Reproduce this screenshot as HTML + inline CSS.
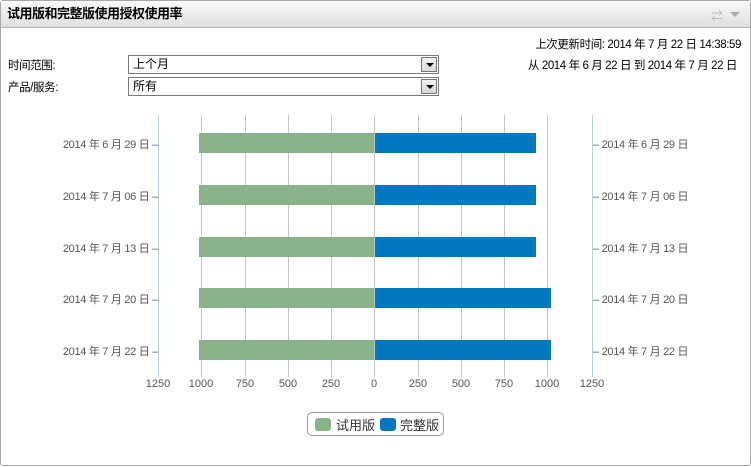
<!DOCTYPE html>
<html><head><meta charset="utf-8"><style>
*{margin:0;padding:0;box-sizing:border-box}
body{width:751px;height:467px;background:#fff;font-family:"Liberation Sans","Noto Sans CJK SC",sans-serif;font-size:12px;color:#000;position:relative;overflow:hidden}
.a{position:absolute}
.frame{left:0;top:0;width:751px;height:466px;border:1px solid #a8a8a8;border-radius:3px}
.title{left:1px;top:1px;width:749px;height:27px;background:linear-gradient(#fafafa,#e0e0e0);border-bottom:1px solid #b5b5b5;font-weight:bold;font-size:13px;line-height:26px;padding-left:6px;letter-spacing:-0.5px}
.sel{height:19px;width:311px;border:1px solid #7a7a7a;background:#fff;padding-left:4px;line-height:17px}
.btn{right:1px;top:1px;width:16px;height:15px;border:1px solid #777;background:linear-gradient(#f4f4f4,#d8d8d8)}
.btn:after{content:"";position:absolute;left:4px;top:5px;border-left:4px solid transparent;border-right:4px solid transparent;border-top:4px solid #000}
.g{width:1px;top:115px;height:255px;background:#c4c4c4}
.ax{width:1px;top:115px;height:255px;background:#b9cde4}
.tk{width:1px;top:370px;height:7px;background:#c4c4c4}
.lab{color:#555;font-size:11px;top:378px;width:40px;text-align:center}
.gr{background:#88b388;height:20px}
.bl{background:#0078c0;height:20px}
.yl{color:#555;width:150px;text-align:right;left:8px;font-size:11px;letter-spacing:-0.3px}
.yr{color:#555;left:593px;font-size:11px;letter-spacing:-0.3px}
.sm{font-size:11.5px;letter-spacing:-0.4px}
</style></head><body>
<div class="a frame"></div>
<div class="a title">试用版和完整版使用授权使用率</div>
<div class="a" style="left:711px;top:7px;color:#b5b5b5;font-size:12px">⇄</div>
<div class="a" style="left:730px;top:12px;border-left:5px solid transparent;border-right:5px solid transparent;border-top:5px solid #aaa"></div>
<div class="a sm" style="right:10px;top:36px">上次更新时间: 2014 年 7 月 22 日 14:38:59</div>
<div class="a sm" style="right:14px;top:57px">从 2014 年 6 月 22 日 到 2014 年 7 月 22 日</div>
<div class="a sm" style="left:8px;top:57px">时间范围:</div>
<div class="a sm" style="left:8px;top:79px">产品/服务:</div>
<div class="a sel" style="left:128px;top:55px">上个月<div class="a btn"></div></div>
<div class="a sel" style="left:128px;top:77px">所有<div class="a btn"></div></div>

<div class="a ax" style="left:158px"></div>
<div class="a g" style="left:201px"></div>
<div class="a g" style="left:245px"></div>
<div class="a g" style="left:288px"></div>
<div class="a g" style="left:331px"></div>
<div class="a g" style="left:374px"></div>
<div class="a g" style="left:418px"></div>
<div class="a g" style="left:461px"></div>
<div class="a g" style="left:504px"></div>
<div class="a g" style="left:547px"></div>
<div class="a ax" style="left:592px"></div>
<div class="a tk" style="left:158px;background:#b9cde4"></div><div class="a tk" style="left:201px"></div><div class="a tk" style="left:245px"></div><div class="a tk" style="left:288px"></div><div class="a tk" style="left:331px"></div><div class="a tk" style="left:374px"></div><div class="a tk" style="left:418px"></div><div class="a tk" style="left:461px"></div><div class="a tk" style="left:504px"></div><div class="a tk" style="left:547px"></div><div class="a tk" style="left:592px;background:#b9cde4"></div>
<div class="a lab" style="left:138px">1250</div><div class="a lab" style="left:181px">1000</div><div class="a lab" style="left:225px">750</div><div class="a lab" style="left:268px">500</div><div class="a lab" style="left:311px">250</div><div class="a lab" style="left:354px">0</div><div class="a lab" style="left:398px">250</div><div class="a lab" style="left:441px">500</div><div class="a lab" style="left:484px">750</div><div class="a lab" style="left:527px">1000</div><div class="a lab" style="left:572px">1250</div>

<div class="a gr" style="left:199px;width:175px;top:133px"></div><div class="a bl" style="left:375px;width:161px;top:133px"></div>
<div class="a gr" style="left:199px;width:175px;top:185px"></div><div class="a bl" style="left:375px;width:161px;top:185px"></div>
<div class="a gr" style="left:199px;width:175px;top:237px"></div><div class="a bl" style="left:375px;width:161px;top:237px"></div>
<div class="a gr" style="left:199px;width:175px;top:288px"></div><div class="a bl" style="left:375px;width:176px;top:288px"></div>
<div class="a gr" style="left:199px;width:175px;top:340px"></div><div class="a bl" style="left:375px;width:176px;top:340px"></div>

<div class="a yl" style="top:136px">2014 年 6 月 29 日 –</div><div class="a yr" style="top:136px">– 2014 年 6 月 29 日</div>
<div class="a yl" style="top:188px">2014 年 7 月 06 日 –</div><div class="a yr" style="top:188px">– 2014 年 7 月 06 日</div>
<div class="a yl" style="top:240px">2014 年 7 月 13 日 –</div><div class="a yr" style="top:240px">– 2014 年 7 月 13 日</div>
<div class="a yl" style="top:291px">2014 年 7 月 20 日 –</div><div class="a yr" style="top:291px">– 2014 年 7 月 20 日</div>
<div class="a yl" style="top:343px">2014 年 7 月 22 日 –</div><div class="a yr" style="top:343px">– 2014 年 7 月 22 日</div>

<div class="a" style="left:307px;top:412px;width:137px;height:24px;border:1px solid #999;border-radius:5px"></div>
<div class="a" style="left:315px;top:418px;width:16px;height:13px;background:#88b388;border-radius:3px"></div>
<div class="a" style="left:336px;top:415px;font-size:13px;color:#333">试用版</div>
<div class="a" style="left:380px;top:418px;width:16px;height:13px;background:#0078c0;border-radius:3px"></div>
<div class="a" style="left:400px;top:415px;font-size:13px;color:#333">完整版</div>
</body></html>
